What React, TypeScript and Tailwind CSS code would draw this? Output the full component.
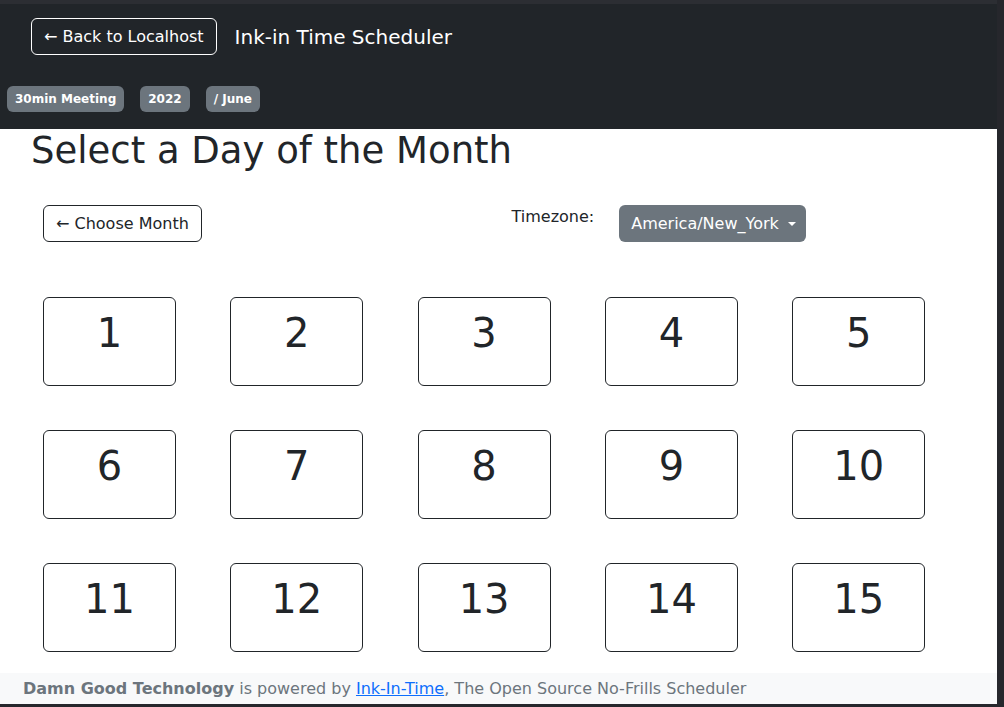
const dias = Array.from({ length: 15 }, (_, i) => i + 1);
const etiquetas = ['30min Meeting', '2022', '/ June'];

function CajaDia({ dia }: { dia: number }) {
  return (
    <button className="flex h-[89px] w-[133px] justify-center rounded-[6px] border border-[#212529] bg-white pt-[11px] text-[40px] leading-[1.2] text-[#212529]">
      {dia}
    </button>
  );
}

export default function App() {
  return (
    <div
      className="flex h-[707px] w-[1004px] overflow-hidden bg-[#26272c]"
      style={{ fontFamily: '"DejaVu Sans", Verdana, sans-serif' }}
    >
      <div className="flex h-[704px] w-[997px] flex-col bg-white">
        <div className="h-[4px] bg-[#2c2e33]" />

        {/* barra superior */}
        <header className="h-[125px] shrink-0 bg-[#212529] pt-[14px]">
          <div className="flex items-center pl-[31px]">
            <button className="flex h-[37px] items-center rounded-[6px] border border-white px-3 text-base text-white">
              ← Back to Localhost
            </button>
            <span className="ml-[18px] text-xl text-white">Ink-in Time Scheduler</span>
          </div>
          <div className="mt-[31px] flex gap-[16px] pl-[7px]">
            {etiquetas.map((e) => (
              <span
                key={e}
                className="flex h-[26px] items-center rounded-[6px] bg-[#6c757d] px-2 text-[12px] font-bold text-white"
              >
                {e}
              </span>
            ))}
          </div>
        </header>

        <main className="min-h-0 flex-1 overflow-hidden">
          <h1 className="mb-2 pl-[31px] text-[37px] leading-[1.2] text-[#212529]">Select a Day of the Month</h1>

          <div className="ml-[31px] mt-8 grid w-[937px] grid-cols-2">
            <div className="px-3">
              <button className="flex h-[37px] items-center rounded-[6px] border border-[#212529] px-3 text-base text-[#212529]">
                ← Choose Month
              </button>
            </div>
            <div className="flex items-start gap-[25px] px-3">
              <span className="text-base leading-6 text-[#212529]">Timezone:</span>
              <button className="flex h-[37px] items-center rounded-[6px] bg-[#6c757d] pl-3 pr-[10px] text-base text-white">
                America/New_York
                <span className="ml-[9px] h-0 w-0 border-x-[4.8px] border-t-[4.8px] border-x-transparent border-t-white" />
              </button>
            </div>
          </div>

          <div className="ml-[43px] mt-[55px] grid grid-cols-[repeat(5,133px)] gap-x-[54.3px] gap-y-[44px]">
            {dias.map((d) => (
              <CajaDia key={d} dia={d} />
            ))}
          </div>
        </main>

        <footer className="h-[31px] shrink-0 bg-[#f8f9fa] pl-[23px] pt-[4px] text-base leading-6 text-[#6c757d]">
          <span className="font-bold">Damn Good Technology</span> is powered by{' '}
          <a href="#" className="text-[#0d6efd] underline">
            Ink-In-Time
          </a>
          , The Open Source No-Frills Scheduler
        </footer>
      </div>
    </div>
  );
}
